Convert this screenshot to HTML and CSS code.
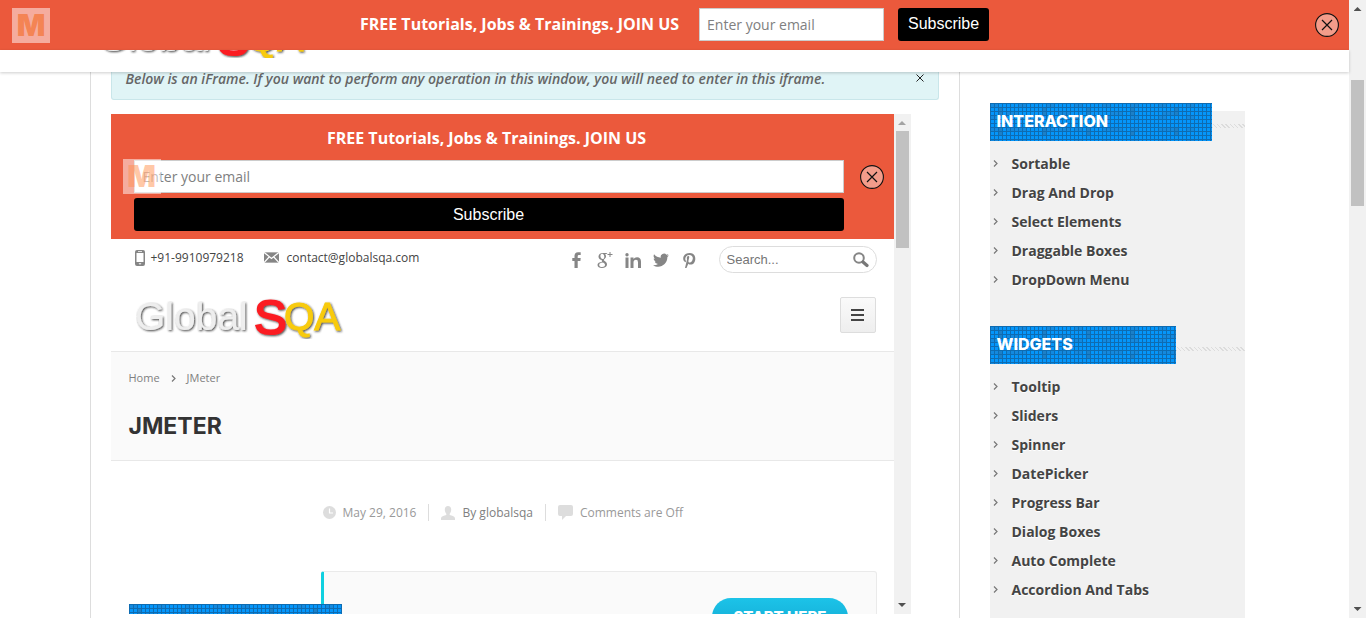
FILE: index.html
```html
<!DOCTYPE html>
<html lang="en">
<head>
<meta charset="utf-8">
<title>GlobalSQA - Frames and Windows</title>
<link rel="stylesheet" href="styles.css">
</head>
<body>
<svg class="defs" aria-hidden="true">
  <defs>
    <filter id="emboss" x="-5%" y="-10%" width="112%" height="125%">
      <feDropShadow dx="1" dy="1" stdDeviation="0.8" flood-color="#222" flood-opacity="0.85"/>
    </filter>
    <symbol id="chev" viewBox="0 0 5 7"><path d="M1 .5 4 3.5 1 6.5" fill="none" stroke="currentColor" stroke-width="1.2"/></symbol>
    <symbol id="cross" viewBox="0 0 24 24"><circle cx="12" cy="12" r="11.4" fill="#f39c8a" stroke="#111" stroke-width="1.1"/><path d="M7 7 17 17M17 7 7 17" stroke="#111" stroke-width="1.2"/></symbol>
  </defs>
</svg>

<div class="page">
  <div class="promo">
    <span class="badge">M</span>
    <form class="promo-form">
      <label class="promo-title" for="email-top">FREE Tutorials, Jobs &amp; Trainings. JOIN US</label>
      <input class="email" id="email-top" type="email" placeholder="Enter your email">
      <button class="subscribe" type="button">Subscribe</button>
    </form>
    <button class="dismiss" type="button" aria-label="Close"><svg><use href="#cross"/></svg></button>
  </div>

  <header class="site-head">
    <a class="head-logo" href="#">
      <svg viewBox="0 32 212 8" width="212" height="8">
        <g filter="url(#emboss)" font-family="Liberation Sans, sans-serif">
          <text x="1" y="33" font-size="39" fill="#eee">Global</text>
          <text x="120" y="37" font-size="49" fill="#fb1c24" stroke="#fb1c24" stroke-width="2">S</text>
          <text x="150" y="33" font-size="39" fill="#f8cb0c" stroke="#f8cb0c">QA</text>
        </g>
      </svg>
    </a>
  </header>

  <div class="container">
    <main class="content">
      <div class="notice">
        <p>Below is an iFrame. If you want to perform any operation in this window, you will need to enter in this iframe.</p>
        <button class="notice-x" type="button" aria-label="Close notice"><svg viewBox="0 0 8 8"><path d="M.5.5 7.5 7.5M7.5.5.5 7.5" stroke="#222"/></svg></button>
      </div>

      <section class="frame">
        <div class="frame-doc">
          <div class="promo-narrow">
            <form class="narrow-form">
              <label class="promo-title" for="email-frame">FREE Tutorials, Jobs &amp; Trainings. JOIN US</label>
              <input class="email" id="email-frame" type="email" placeholder="Enter your email">
              <button class="subscribe" type="button">Subscribe</button>
            </form>
            <span class="badge badge-over">M</span>
            <button class="dismiss dismiss-over" type="button" aria-label="Close"><svg><use href="#cross"/></svg></button>
          </div>

          <div class="contact-bar">
            <a class="contact" href="#"><svg width="10" height="16" viewBox="0 0 10 16"><path fill="#858585" fill-rule="evenodd" d="M2 0h6q2 0 2 2v12q0 2-2 2H2q-2 0-2-2V2q0-2 2-2zM1.500 3v9h7V3zM3 1.200v.9h4v-.9zM3.500 13.300 5 14.800 6.500 13.300z"/></svg>+91-9910979218</a>
            <a class="contact mail" href="#"><svg width="15" height="11" viewBox="0 0 16 11"><path fill="#858585" d="M0 0h16v11H0z"/><path d="M0 0 8 6.500 16 0M0 11 5.500 5M16 11 10.500 5" fill="none" stroke="#fff" stroke-width="1.300"/></svg>contact@globalsqa.com</a>
            <nav class="social">
              <a href="#" aria-label="Facebook"><svg viewBox="0 0 16 16"><path d="M5.500 16V9H3.300V6h2.200V4q0-3.800 3.500-3.800h2.700V3h-1.800Q8.700 3 8.700 4.300V6h3l-.3 3H8.700v7z"/></svg></a>
              <a href="#" aria-label="Google Plus"><svg viewBox="0 0 16 16"><path fill-rule="evenodd" d="M10.500 1H6C3.200 1 1.500 2.600 1.500 4.700c0 2 1.500 3.200 3.500 3.400-.5.800-.4 1.500.2 2C2.300 10.200.5 11.300.5 13c0 1.900 1.900 3 4.400 3 3 0 5.100-1.500 5.100-3.600 0-1.600-.9-2.500-2.300-3.400C6.500 8.200 6.600 7.700 7.500 7c1-.8 1.500-1.600 1.500-2.700 0-1-.4-1.700-1-2.200h1.400zM5.300 1.800c1.100 0 2 1.400 2 3 0 1.400-.7 2.300-1.700 2.300-1.200 0-2.200-1.400-2.200-3 0-1.400.8-2.300 1.900-2.300zM6 10.600c1.200.8 2 1.300 2 2.400 0 1.300-1.100 2-2.800 2-1.800 0-3-.8-3-2.100 0-1.400 1.500-2.300 3.800-2.300zM12.500 0h1v2h2v1h-2v2h-1V3h-2V2h2z"/></svg></a>
              <a href="#" aria-label="LinkedIn"><svg viewBox="0 0 16 16"><path d="M.5 5.500h3V16h-3zM2 1a1.700 1.700 0 1 1 0 3.400A1.700 1.700 0 0 1 2 1zM5.500 5.500h3V7Q9.600 5.200 12 5.200q4 0 4 4.500V16h-3v-5.800q0-2.400-2-2.400-2.500 0-2.500 2.700V16h-3z"/></svg></a>
              <a href="#" aria-label="Twitter"><svg viewBox="0 0 16 16"><path d="M16 3.400l-1.900.3L15.500 2l-2 .7a3.300 3.300 0 0 0-5.700 3Q3.700 5.500 1.100 2.300C.1 4.100.7 5.900 2.100 6.800L.7 6.400c0 1.600 1.100 2.900 2.600 3.200H1.800c.4 1.400 1.600 2.200 3.100 2.300A7 7 0 0 1 0 13.200C6.500 17.200 14.400 12.900 14.400 5.100z"/></svg></a>
              <a href="#" aria-label="Pinterest"><svg viewBox="0 0 16 16"><path d="M8.700 1C4.800 1 2.200 3.400 2.200 6.400c0 1.600.8 3.100 2.100 3.700.6.200.5-.5.700-1.200C3.300 6.600 4.700 2.900 8.300 2.900c2.700 0 3.900 1.800 3.400 4.200-.4 2.400-1.600 3.600-3 3.500-1.100-.1-1.500-.9-1.200-2L8.300 5c0-1.500-2.300-1.300-2.500.9l.2 1.500L4 16l1.300.5 2-4.700c.7.700 1.400.8 2.200.8 3 0 4.800-2.700 4.800-5.900C14.300 3.400 12.300 1 8.700 1z"/></svg></a>
            </nav>
            <label class="search">
              <input type="text" placeholder="Search..." aria-label="Search">
              <svg width="16" height="16" viewBox="0 0 16 16"><circle cx="6" cy="6" r="4.800" fill="none" stroke="#858585" stroke-width="2"/><path d="M10 10 14 13.500" stroke="#777" stroke-width="3.200" stroke-linecap="round"/></svg>
            </label>
          </div>

          <div class="brand-bar">
            <a class="logo" href="#">
              <svg viewBox="0 0 212 42" width="212" height="42">
                <g filter="url(#emboss)" font-family="Liberation Sans, sans-serif">
                  <text x="1" y="33" font-size="39" fill="#eee">Global</text>
                  <text x="120" y="37" font-size="49" fill="#fb1c24" stroke="#fb1c24" stroke-width="2">S</text>
                  <text x="150" y="33" font-size="39" fill="#f8cb0c" stroke="#f8cb0c">QA</text>
                </g>
              </svg>
            </a>
            <button class="menu" type="button" aria-label="Menu"><svg width="13" height="12" viewBox="0 0 13 12"><path d="M0 1h13M0 6h13M0 11h13" stroke="#444" stroke-width="2"/></svg></button>
          </div>

          <div class="title-band">
            <nav class="crumbs"><a href="#">Home</a><svg class="chev"><use href="#chev"/></svg><span>JMeter</span></nav>
            <h1>JMETER</h1>
          </div>

          <div class="post">
            <ul class="meta">
              <li><svg width="13" height="13" viewBox="0 0 13 13"><circle cx="6.500" cy="6.500" r="6.500" fill="#ddd"/><path d="M6.500 2.500V7H10" fill="none" stroke="#fff" stroke-width="1.200"/></svg>May 29, 2016</li>
              <li><svg width="14" height="14" viewBox="0 0 14 14"><path fill="#ddd" d="M7 0c2 0 3.200 1.300 3.200 3.500C10.200 5.500 9.400 7 8.700 7.800V9c2 .7 5.300 1.200 5.300 3.500V14H0v-1.500C0 10.200 3.300 9.700 5.300 9V7.800C4.600 7 3.800 5.500 3.800 3.500 3.800 1.300 5 0 7 0z"/></svg><a href="#">By globalsqa</a></li>
              <li><svg width="15" height="15" viewBox="0 0 15 15"><path fill="#ddd" d="M2 0h11q2 0 2 2v7q0 2-2 2H8l-4 4v-4H2q-2 0-2-2V2q0-2 2-2z"/></svg>Comments are Off</li>
            </ul>
            <div class="callout"><a class="start" href="#">START HERE</a></div>
            <div class="ribbon mesh"></div>
          </div>
        </div>

        <div class="scroll scroll-in">
          <i class="up"></i><i class="thumb"></i><i class="down"></i>
        </div>
      </section>
    </main>

    <aside class="side">
      <section class="group">
        <h2><span class="mesh wide">INTERACTION</span></h2>
        <ul>
          <li><svg class="chev"><use href="#chev"/></svg><a href="#">Sortable</a></li>
          <li><svg class="chev"><use href="#chev"/></svg><a href="#">Drag And Drop</a></li>
          <li><svg class="chev"><use href="#chev"/></svg><a href="#">Select Elements</a></li>
          <li><svg class="chev"><use href="#chev"/></svg><a href="#">Draggable Boxes</a></li>
          <li><svg class="chev"><use href="#chev"/></svg><a href="#">DropDown Menu</a></li>
        </ul>
      </section>
      <section class="group">
        <h2><span class="mesh">WIDGETS</span></h2>
        <ul>
          <li><svg class="chev"><use href="#chev"/></svg><a href="#">Tooltip</a></li>
          <li><svg class="chev"><use href="#chev"/></svg><a href="#">Sliders</a></li>
          <li><svg class="chev"><use href="#chev"/></svg><a href="#">Spinner</a></li>
          <li><svg class="chev"><use href="#chev"/></svg><a href="#">DatePicker</a></li>
          <li><svg class="chev"><use href="#chev"/></svg><a href="#">Progress Bar</a></li>
          <li><svg class="chev"><use href="#chev"/></svg><a href="#">Dialog Boxes</a></li>
          <li><svg class="chev"><use href="#chev"/></svg><a href="#">Auto Complete</a></li>
          <li><svg class="chev"><use href="#chev"/></svg><a href="#">Accordion And Tabs</a></li>
        </ul>
      </section>
    </aside>
  </div>
</div>

<div class="scroll scroll-out">
  <i class="up"></i><i class="thumb"></i><i class="down"></i>
</div>
</body>
</html>
```
FILE: styles.css
```css
* { box-sizing: border-box; }
body {
  margin: 0;
  display: flex;
  height: 100vh;
  overflow: hidden;
  background: #fff;
  color: #444;
  font-family: "Open Sans", "Noto Sans", sans-serif;
  font-size: 14px;
}
a { color: inherit; text-decoration: none; }
ul { list-style: none; margin: 0; padding: 0; }
h1, h2, p { margin: 0; }
button { border: 0; padding: 0; cursor: pointer; }
svg { flex: none; display: block; }
.defs { position: absolute; width: 0; height: 0; }
.page { flex: 1; min-width: 0; display: flex; flex-direction: column; }

/* promo bars */
.promo {
  display: grid;
  grid-template-columns: 1fr auto 1fr;
  align-items: center;
  height: 50px;
  flex: none;
  padding: 0 10px 0 12px;
  background: #eb593c;
}
.promo-form { display: flex; align-items: center; padding: 0 2px 2px 0; }
.promo-title { color: #fff; font-size: 16px; font-weight: 700; line-height: 22px; white-space: nowrap; }
.email {
  height: 33px;
  border: 1px solid #ccc;
  padding: 0 7px;
  background: #fff;
  font: 14px "Open Sans", sans-serif;
}
.email::placeholder { color: #808080; }
.subscribe {
  height: 33px;
  border-radius: 3px;
  background: #000;
  color: #fff;
  font: 16px "Liberation Sans", Arial, sans-serif;
}
.promo .email { width: 185px; margin: 0 14px 0 20px; }
.promo .subscribe { width: 91px; }
.badge {
  display: flex;
  align-items: center;
  justify-content: center;
  width: 38px;
  height: 35px;
  background: rgba(255, 255, 255, .5);
  color: rgba(244, 108, 40, .65);
  font: 900 30px/35px Inter, sans-serif;
}
.dismiss { width: 24px; height: 24px; background: none; justify-self: end; }
.dismiss svg { width: 24px; height: 24px; }

.site-head {
  position: relative;
  z-index: 2;
  height: 22px;
  flex: none;
  background: #fff;
  box-shadow: 0 1px 3px rgba(0, 0, 0, .2);
}
.head-logo { display: block; width: 212px; margin-left: 97px; }

/* page columns */
.container {
  display: flex;
  flex: 1;
  min-height: 0;
  width: 100%;
  max-width: 1170px;
  margin: 0 auto;
}
.content {
  flex: 1;
  min-width: 0;
  padding: 0 20px;
  border: 1px solid #ddd;
  border-width: 0 1px;
}
.notice {
  display: flex;
  justify-content: space-between;
  padding: 0 14px 13px;
  background: #e0f4f6;
  border: 1px solid #c9e6ea;
  border-top: 0;
  border-radius: 0 0 3px 3px;
}
.notice p { font-size: 14px; line-height: 14px; font-style: italic; font-weight: 600; color: #666; }
.notice-x { width: 8px; height: 8px; margin-top: 2px; background: none; }

.frame { display: flex; max-width: 800px; height: 500px; margin-top: 14px; overflow: hidden; }
.frame-doc { flex: 1; min-width: 0; }
.promo-narrow { position: relative; padding: 13px 50px 8px 23px; background: #eb593c; }
.narrow-form { display: flex; flex-direction: column; }
.narrow-form .promo-title { align-self: center; margin-bottom: 11px; padding-right: 4px; }
.narrow-form .email { padding: 0 8px; }
.narrow-form .subscribe { margin-top: 5px; }
.badge-over { position: absolute; left: 12px; top: 45px; color: rgba(255, 145, 80, .5); }
.dismiss-over { position: absolute; right: 10px; top: 51px; }

.contact-bar { display: flex; align-items: center; padding: 7px 17px 0 24px; font-size: 12px; }
.contact { display: flex; align-items: center; gap: 6px; margin-right: 20px; height: 23px; align-self: flex-start; }
.mail { gap: 8px; }
.social { display: flex; gap: 12px; margin-left: auto; }
.social svg { width: 16px; height: 16px; fill: #868686; }
.search {
  display: flex;
  align-items: center;
  width: 158px;
  height: 27px;
  margin-left: 22px;
  padding: 0 7px;
  border: 1px solid #ddd;
  border-radius: 14px;
}
.search input {
  flex: 1;
  min-width: 0;
  border: 0;
  padding: 0;
  background: none;
  font: 13px "Liberation Sans", Arial, sans-serif;
}
.search input::placeholder { color: #757575; }
.brand-bar { display: flex; justify-content: space-between; align-items: flex-start; padding: 24px 18px 12px 23px; }
.menu {
  display: flex;
  align-items: center;
  justify-content: center;
  width: 36px;
  height: 36px;
  border: 1px solid #ddd;
  border-radius: 2px;
  background: linear-gradient(#fafafa, #eee);
}
.title-band { height: 110px; padding: 17px 18px; background: #fafafa; border: 1px solid #e8e8e8; border-width: 1px 0; }
.crumbs { display: flex; align-items: center; gap: 11px; font-size: 11px; line-height: 18px; color: #808080; }
.title-band h1 { margin-top: 24px; font: 700 23px/30px Inter, sans-serif; color: #333; }
.chev { width: 5px; height: 7px; color: #777; }

.post { position: relative; padding: 43px 17px 0 210px; height: 153px; }
.meta { display: flex; line-height: 17px; font-size: 12px; color: #999; padding-left: 2px; }
.meta li { display: flex; align-items: center; gap: 7px; }
.meta li + li { margin-left: 12px; padding-left: 12px; border-left: 1px solid #ddd; }
.meta a { color: #808080; }
.callout {
  display: flex;
  justify-content: flex-end;
  align-items: flex-start;
  height: 60px;
  margin-top: 50px;
  padding: 26px 28px 0;
  background: #fafafa;
  border: 1px solid #eaeaea;
  border-left: 3px solid #0fd0e0;
  border-radius: 3px;
}
.start {
  padding: 7px 21px;
  border-radius: 19px;
  background: linear-gradient(#1cc3e8, #12a6d0);
  color: #fff;
  font: 800 15px/24px Inter, sans-serif;
}
.ribbon { position: absolute; left: 18px; top: 143px; width: 213px; height: 38px; }

/* woven blue heading texture, 4px cells with darker ones scattered */
.mesh {
  background:
    linear-gradient(#0e6cb2 1px, transparent 1px) 0 0 / 4px 4px,
    linear-gradient(90deg, #0e6cb2 1px, transparent 1px) 0 0 / 4px 4px,
    conic-gradient(at 8px 4px, transparent 75%, #1389df 0) 0 0 / 28px 12px,
    conic-gradient(at 4px 8px, transparent 75%, #1c80c8 0) 8px 4px / 44px 20px,
    conic-gradient(at 12px 4px, transparent 75%, #1389df 0) 16px 8px / 52px 16px,
    #0496fb;
}

/* sidebar */
.side { width: 255px; margin: 39px 15px 0 30px; background: #f1f1f1; }
.group { margin-bottom: 32px; }
.group:first-child h2 { margin-top: -8px; }
.group h2 { display: flex; font: 800 16px/36px Inter, sans-serif; color: #fff; }
.group h2::after {
  content: "";
  flex: 1;
  height: 4px;
  margin-top: 21px;
  background: repeating-linear-gradient(45deg, #dcdcdc 0 1px, transparent 1px 3px);
}
.group h2 span { width: 186px; padding: 0 0 2px 7px; }
.group h2 .wide { width: 222px; }
.group ul { padding-top: 8px; }
.group li { display: flex; align-items: center; gap: 14px; height: 29px; padding-left: 3px; font-weight: 700; text-shadow: 0 1px 0 #fff; }

/* scrollbars */
.scroll { flex: none; width: 17px; display: flex; flex-direction: column; align-items: center; background: #f1f1f1; }
.scroll .up, .scroll .down { width: 8px; height: 4px; background: #505050; }
.scroll .up { margin-top: 7px; clip-path: polygon(50% 0, 100% 100%, 0 100%); }
.scroll .down { margin: auto 0 7px; clip-path: polygon(0 0, 100% 0, 50% 100%); }
.thumb { width: 13px; background: #c1c1c1; }
.scroll-out .thumb { height: 126px; margin-top: 69px; }
.scroll-in .thumb { height: 117px; margin-top: 6px; }
.scroll-in .up { background: #a3a3a3; }
```
